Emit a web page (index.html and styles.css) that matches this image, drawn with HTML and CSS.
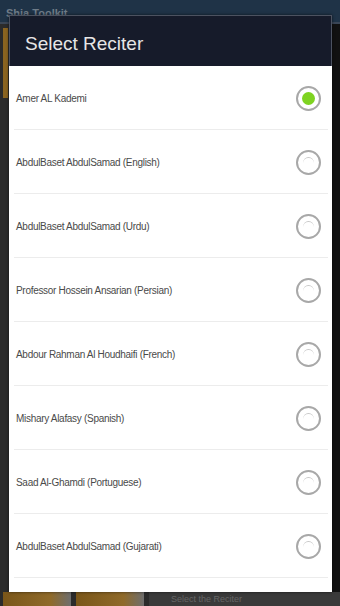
FILE: index.html
```html
<!DOCTYPE html>
<html>
    <head>
        <link rel="stylesheet" href="styles.css">
    </head>
    <body>
        <div class="app">
            <header class="appbar">Shia Toolkit</header>
            <main class="appbody">
                <div class="side-gold"></div>
            </main>
            <footer class="appfoot">
                <span class="foot-btn"></span>
                <span class="foot-btn"></span>
                <span class="foot-text">Select the Reciter</span>
            </footer>

            <div class="dialog">
                <h1 class="dialog-title">Select Reciter</h1>
                <ul class="reciters">
                    <li class="reciter"><span>Amer AL Kademi</span><span class="radio checked"></span></li>
                    <li class="reciter"><span>AbdulBaset AbdulSamad (English)</span><span class="radio"></span></li>
                    <li class="reciter"><span>AbdulBaset AbdulSamad (Urdu)</span><span class="radio"></span></li>
                    <li class="reciter"><span>Professor Hossein Ansarian (Persian)</span><span class="radio"></span></li>
                    <li class="reciter"><span>Abdour Rahman Al Houdhaifi (French)</span><span class="radio"></span></li>
                    <li class="reciter"><span>Mishary Alafasy (Spanish)</span><span class="radio"></span></li>
                    <li class="reciter"><span>Saad Al-Ghamdi (Portuguese)</span><span class="radio"></span></li>
                    <li class="reciter"><span>AbdulBaset AbdulSamad (Gujarati)</span><span class="radio"></span></li>
                </ul>
            </div>
        </div>
    </body>
</html>
```

FILE: styles.css
```css
body {
    margin: 0;
    padding: 0;
    background-color: #262626;
    font-family: "Liberation Sans", Arial, sans-serif;
}
.app {
    position: relative;
    width: 340px;
    height: 606px;
    overflow: hidden;
    display: flex;
    flex-direction: column;
    background-color: #2b2b2b;
}
.appbar {
    height: 22px;
    background-color: #1f3347;
    color: #6f7c88;
    font-size: 11px;
    font-weight: bold;
    padding-left: 6px;
    line-height: 26px;
    border-bottom: 2px solid #3a4656;
}
.appbody {
    flex: 1;
    display: flex;
    padding-top: 4px;
    border-right: 8px solid #111;
}
.side-gold {
    width: 5px;
    height: 70px;
    margin-left: 3px;
    background-color: #8a6420;
}
.appfoot {
    height: 14px;
    display: flex;
    gap: 5px;
    padding-left: 3px;
    background-color: #2b2b2b;
}
.foot-btn {
    width: 68px;
    background: linear-gradient(90deg, #7a5619, #8f6a2a 70%, #6e6e6e);
}
.foot-text {
    flex: 1;
    color: #666;
    font-size: 9px;
    padding-left: 22px;
    padding-top: 2px;
    background-color: #3a3a3a;
}
.dialog {
    position: absolute;
    left: 9px;
    top: 15px;
    width: 323px;
    height: 577px;
    background-color: #fff;
    display: flex;
    flex-direction: column;
    box-shadow: 0 0 3px rgba(0, 0, 0, 0.6);
}
.dialog-title {
    margin: 0;
    height: 50px;
    background-color: #161b2a;
    border: 1px solid #4c5260;
    border-bottom: none;
    color: #e6e6e6;
    font-size: 19px;
    font-weight: normal;
    padding-left: 15px;
    line-height: 56px;
}
.reciters {
    list-style: none;
    margin: 0;
    padding: 0 4px 0 5px;
}
.reciter {
    height: 62px;
    border-bottom: 1px solid #ececec;
    display: flex;
    align-items: center;
    justify-content: space-between;
    padding: 1px 7px 0 2px;
    color: #4a4a4a;
    font-size: 10px;
    letter-spacing: -0.3px;
}
.radio {
    position: relative;
    width: 21px;
    height: 21px;
    border: 2px solid #a8a8a8;
    border-radius: 50%;
}
.radio::after {
    content: "";
    position: absolute;
    left: 5px;
    top: 5px;
    width: 11px;
    height: 11px;
    border-radius: 50%;
    border-top: 1px solid #c8c8c8;
}
.radio.checked::after {
    left: 4px;
    top: 4px;
    width: 13px;
    height: 13px;
    border: none;
    background-color: #7ed321;
}
```
